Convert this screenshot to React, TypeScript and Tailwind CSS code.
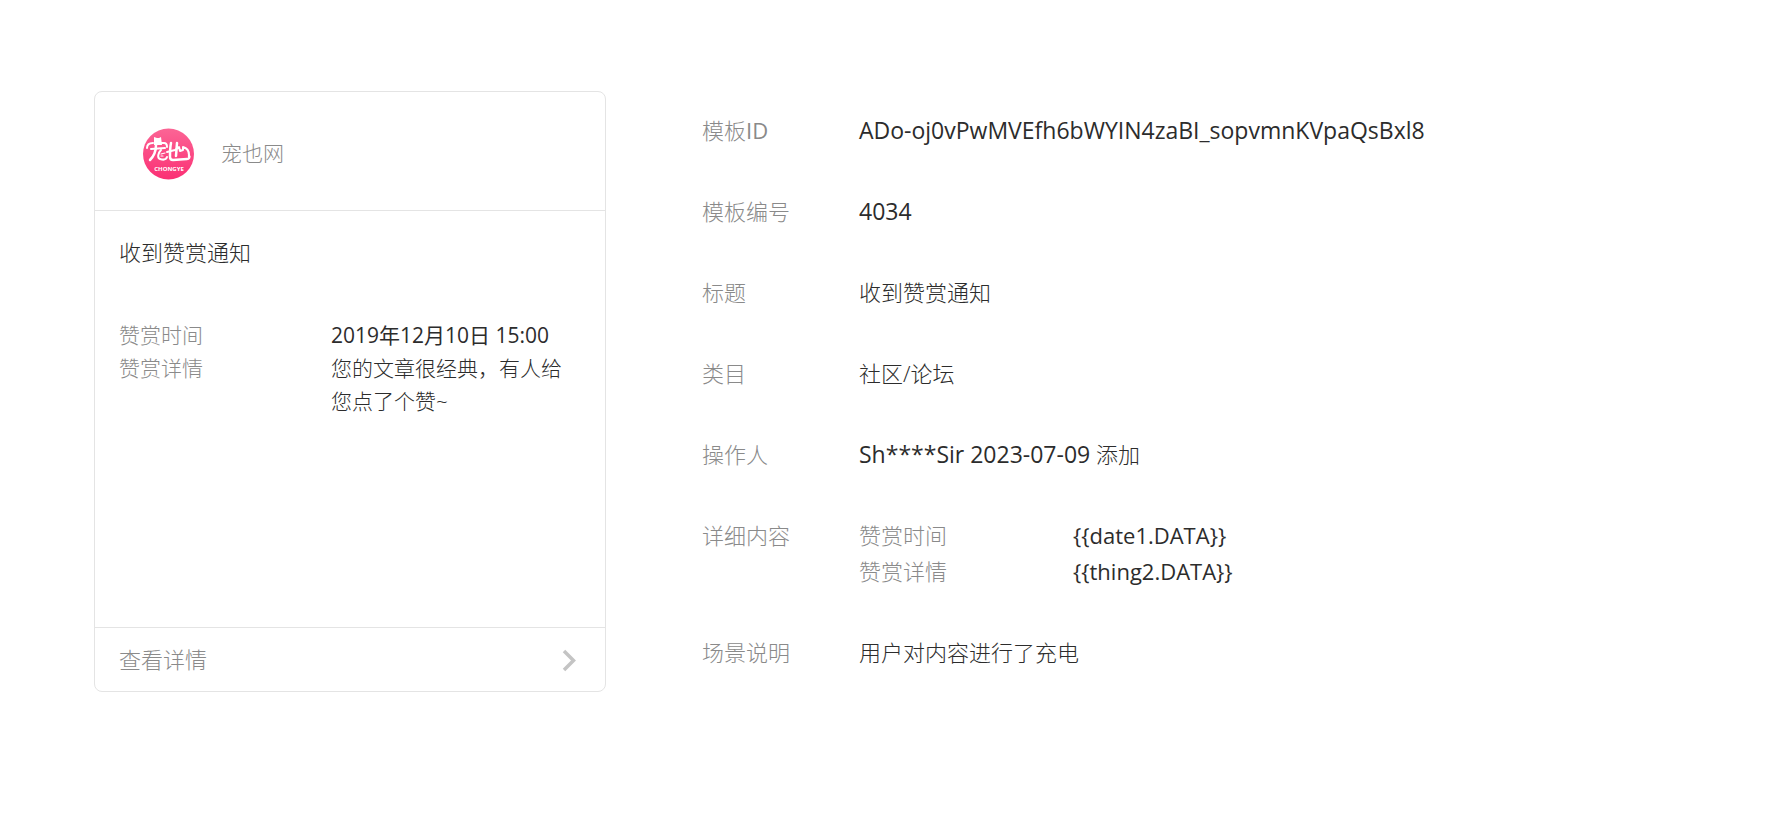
import { ReactNode } from "react";

type Keyword = { label: string; example: ReactNode; data: string };

type DetailRow = { id: string; label: ReactNode; value: ReactNode };

const keywords: Keyword[] = [
  {
    label: "赞赏时间",
    example: <span className="font-normal">2019年12月10日 15:00</span>,
    data: "{{date1.DATA}}",
  },
  {
    label: "赞赏详情",
    example: "您的文章很经典，有人给您点了个赞~",
    data: "{{thing2.DATA}}",
  },
];

// The light weight suits the Chinese text, latin text needs the regular one
const Latin = ({ children }: { children: ReactNode }) => (
  <span className="text-[23px] font-normal">{children}</span>
);

const KeywordTable = () => (
  <table>
    <tbody>
      {keywords.map((item) => (
        <tr key={item.label}>
          <th
            scope="row"
            className="w-[214px] p-0 text-left font-light text-[#8a8a8a]"
          >
            {item.label}
          </th>
          <td className="p-0 font-normal">{item.data}</td>
        </tr>
      ))}
    </tbody>
  </table>
);

const rows: DetailRow[] = [
  {
    id: "template_id",
    label: (
      <>
        模板<span className="font-normal">ID</span>
      </>
    ),
    value: <Latin>ADo-oj0vPwMVEfh6bWYIN4zaBI_sopvmnKVpaQsBxl8</Latin>,
  },
  { id: "number", label: "模板编号", value: <Latin>4034</Latin> },
  { id: "title", label: "标题", value: "收到赞赏通知" },
  { id: "category", label: "类目", value: "社区/论坛" },
  {
    id: "operator",
    label: "操作人",
    value: (
      <>
        <Latin>Sh****Sir 2023-07-09</Latin> 添加
      </>
    ),
  },
  { id: "content", label: "详细内容", value: <KeywordTable /> },
  { id: "scene", label: "场景说明", value: "用户对内容进行了充电" },
];

const Logo = () => (
  <svg viewBox="0 0 52 52" className="size-[52px]" aria-hidden="true">
    <defs>
      <linearGradient id="logo-bg" x1="0" y1="0" x2="0" y2="1">
        <stop offset="0" stopColor="#fb6595" />
        <stop offset="1" stopColor="#fb2f74" />
      </linearGradient>
    </defs>
    <circle cx="25.5" cy="26" r="25.5" fill="url(#logo-bg)" />
    <g
      fill="none"
      stroke="#fff"
      strokeWidth="2"
      strokeLinecap="round"
      strokeLinejoin="round"
    >
      <path d="M4 20c0-3 2-5 6-5M18 15h3c3 0 3 2 3 4" />
      <path d="M11 9l3 1h2l2-1 1 8h-8z" fill="#fff" stroke="none" />
      <path d="M8 21l14-1" />
      <path d="M13 17c0 7-2 11-6 15" strokeWidth="2.5" />
      <path d="M18 22c-3 3-4 8-1 9 3 1 6 1 7-2" />
      <path d="M18 26l4-1M18 28h2" strokeWidth="1.2" />
      <path d="M28 15c-1 5-1 10-1 14 0 2 1 3 3 3l14-1c2 0 3-2 2-3" strokeWidth="2.5" />
      <path d="M24 24l8-2 4-3 1 4 3-1v-3c4 1 6 4 6 8" />
      <path d="M34 15l-1 13" strokeWidth="2.5" />
    </g>
    {/* small lettering under the mark */}
    <text
      x="26"
      y="43"
      textAnchor="middle"
      fill="#fff"
      className="font-['Open_Sans',sans-serif] text-[6px] font-bold"
    >
      CHONGYE
    </text>
  </svg>
);

const PreviewCard = () => (
  <section className="flex min-h-[601px] w-[512px] shrink-0 flex-col rounded-lg border border-[#e4e4e4]">
    <header className="flex items-center gap-[26px] border-b border-[#e4e4e4] px-12 pt-9 pb-[30px]">
      <Logo />
      <span className="text-[21px] text-[#8a8a8a]">宠也网</span>
    </header>
    <div className="flex-1 px-6 pt-[25px]">
      <h2 className="text-[22px] leading-[33px]">收到赞赏通知</h2>
      <dl className="mt-[50px] text-[21px] leading-[33px]">
        {keywords.map((item) => (
          <div key={item.label} className="flex">
            <dt className="w-[212px] shrink-0 text-[#8a8a8a]">{item.label}</dt>
            <dd>{item.example}</dd>
          </div>
        ))}
      </dl>
    </div>
    <button className="flex h-16 items-center justify-between border-t border-[#e4e4e4] px-6 text-[22px] text-[#8a8a8a]">
      查看详情
      <svg
        viewBox="0 0 24 24"
        className="size-6 text-[#c4c4c4]"
        fill="none"
        stroke="currentColor"
        strokeWidth="3.5"
        aria-hidden="true"
      >
        <path d="M7 3l9.5 9.5L7 22" />
      </svg>
    </button>
  </section>
);

const App = () => {
  return (
    <main className="flex items-start gap-24 bg-white pt-[91px] pr-12 pb-[124px] pl-[94px] font-['Open_Sans','Noto_Sans_CJK_SC',sans-serif] font-light text-[#2c2c2c]">
      <PreviewCard />
      <dl className="flex min-w-0 flex-1 flex-col gap-[45px] pt-[21px] text-[22px] leading-9">
        {rows.map((row) => (
          <div key={row.id} className="flex">
            <dt className="w-[157px] shrink-0 text-[#8a8a8a]">{row.label}</dt>
            <dd className="min-w-0 break-words">{row.value}</dd>
          </div>
        ))}
      </dl>
    </main>
  );
};

export default App;
